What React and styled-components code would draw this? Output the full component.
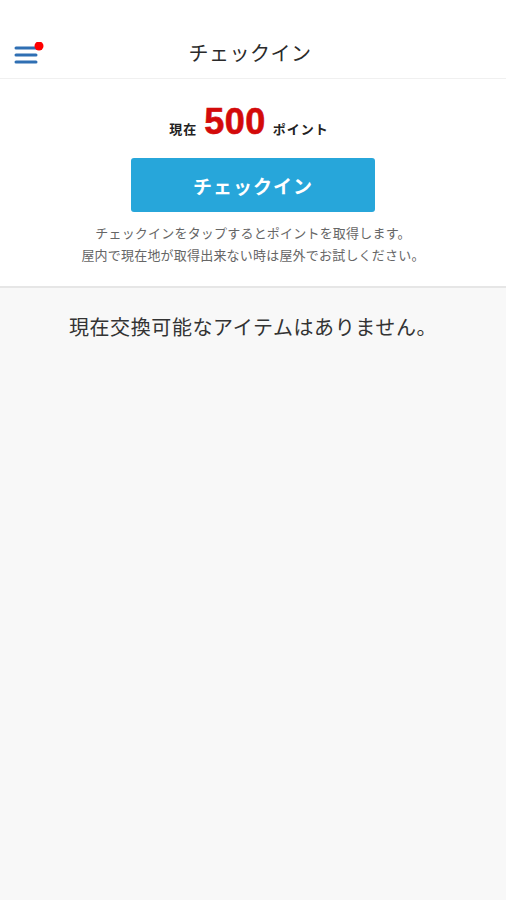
import styled, { createGlobalStyle } from "styled-components";

const GlobalStyle = createGlobalStyle`
    html, body {
        margin: 0;
        padding: 0;
        background: #f8f8f8;
    }
    body {
        font-family: "Liberation Sans", "Noto Sans CJK JP", sans-serif;
    }
`;

const Page = styled.div`
    width: 506px;
    min-height: 900px;
    background: #f8f8f8;
    display: flex;
    flex-direction: column;
`;

const Header = styled.header`
    height: 78px;
    background: #fff;
    border-bottom: 1px solid #f0f0f0;
    display: flex;
    align-items: center;
    justify-content: center;
    position: relative;
    h1 {
        margin: 0 0 0 -6px;
        padding-top: 26px;
        font-size: 20px;
        font-weight: 400;
        color: #2a2a2a;
        letter-spacing: 0.5px;
    }
`;

const MenuButton = styled.button`
    position: absolute;
    left: 14px;
    top: 42px;
    width: 30px;
    height: 24px;
    padding: 0;
    border: none;
    background: none;
`;

const TopPanel = styled.section`
    background: #fff;
    border-bottom: 2px solid #e6e6e6;
    display: flex;
    flex-direction: column;
    align-items: center;
    padding: 22px 0 19px;
`;

const PointRow = styled.div`
    display: flex;
    align-items: baseline;
    gap: 7px;
    color: #222;
    font-size: 13px;
    font-weight: 700;
    letter-spacing: 1px;
    height: 36px;
    margin-left: -8px;
    strong {
        font-size: 36px;
        font-weight: 700;
        color: #d30a0a;
        letter-spacing: 0.5px;
        -webkit-text-stroke: 0.6px #d30a0a;
    }
`;

const CheckinButton = styled.button`
    margin-top: 21px;
    width: 244px;
    height: 54px;
    border: none;
    border-radius: 3px;
    background: #27a6da;
    color: #fff;
    font-family: inherit;
    font-size: 19px;
    font-weight: 700;
    letter-spacing: 1px;
`;

const Note = styled.p`
    margin: 11px 0 0;
    text-align: center;
    font-size: 13px;
    line-height: 22px;
    color: #666;
    letter-spacing: 0.2px;
`;

const Empty = styled.p`
    margin: 24px 0 0;
    text-align: center;
    font-size: 20px;
    color: #333;
    letter-spacing: 0.6px;
`;

const App = () => {
    return (
        <Page>
            <GlobalStyle />
            <Header>
                <MenuButton aria-label="menu">
                    <svg width="30" height="24" viewBox="0 0 30 24">
                        <g stroke="#2f6fb3" strokeWidth="3" strokeLinecap="round">
                            <line x1="2" y1="6" x2="22" y2="6" />
                            <line x1="2" y1="13" x2="22" y2="13" />
                            <line x1="2" y1="20" x2="22" y2="20" />
                        </g>
                        <circle cx="25" cy="4" r="4.5" fill="#f00" />
                    </svg>
                </MenuButton>
                <h1>チェックイン</h1>
            </Header>
            <TopPanel>
                <PointRow>
                    <span>現在</span>
                    <strong>500</strong>
                    <span>ポイント</span>
                </PointRow>
                <CheckinButton>チェックイン</CheckinButton>
                <Note>
                    チェックインをタップするとポイントを取得します。
                    <br />
                    屋内で現在地が取得出来ない時は屋外でお試しください。
                </Note>
            </TopPanel>
            <Empty>現在交換可能なアイテムはありません。</Empty>
        </Page>
    );
};

export default App;
